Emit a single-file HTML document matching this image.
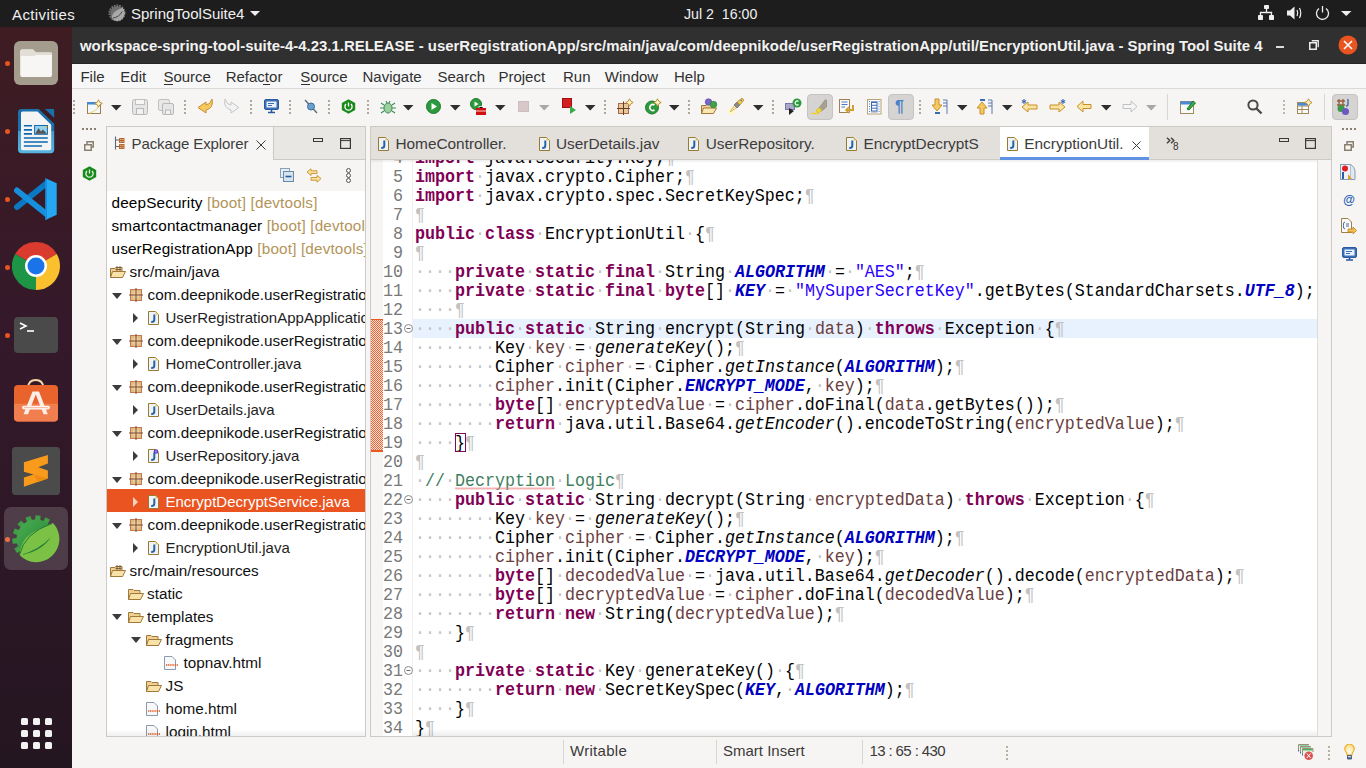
<!DOCTYPE html><html><head><meta charset="utf-8"><title>STS</title><style>
html,body{margin:0;padding:0;}
body{width:1366px;height:768px;position:relative;overflow:hidden;background:#f6f5f4;font-family:"Liberation Sans",sans-serif;}
.r{position:absolute;display:block;}
.t{position:absolute;white-space:nowrap;line-height:20px;}
.ln{position:absolute;left:0;width:32px;transform:scaleY(1.1);transform-origin:0 14px;text-align:right;font-family:"Liberation Mono",monospace;font-size:16.6667px;line-height:19px;color:#787878;}
.code{position:absolute;left:44px;white-space:pre;transform:scaleY(1.1);transform-origin:0 14px;font-family:"Liberation Mono",monospace;font-size:16.6667px;line-height:19px;color:#000;}
.code b{font-weight:bold}
.bm{}
.sq{}
</style></head><body><div class="r" style="left:0px;top:0px;width:1366px;height:27px;background:#1d1d1d;"></div>
<div class="t" style="left:12px;top:5px;font-size:15px;color:#f0f0f0;font-weight:normal;font-family:'Liberation Sans', sans-serif;letter-spacing:0.4px">Activities</div>
<svg class="r" style="left:108px;top:4px;" width="18" height="18" viewBox="0 0 18 18"><circle cx="9" cy="9" r="7.6" fill="none" stroke="#7a7a7a" stroke-width="1.8" stroke-dasharray="1.6 1.1"/><circle cx="9" cy="9" r="6.9" fill="#6e6e6e"/><path d="M3.6 14.6C4.2 8.5 7.5 6.5 14.6 3.8A7.6 7.6 0 0 1 3.6 14.6Z" fill="#a9a9a9"/><path d="M4.5 14.2Q11.5 13 14.2 7.5" stroke="#3a3a3a" stroke-width="0.9" fill="none"/></svg>
<div class="t" style="left:131px;top:4px;font-size:15px;color:#f0f0f0;font-weight:normal;font-family:'Liberation Sans', sans-serif;">SpringToolSuite4</div>
<svg class="r" style="left:250px;top:11px;" width="10" height="6" viewBox="0 0 10 6"><path d="M0 0H10L5 5Z" fill="#eee"/></svg>
<div class="t" style="left:684px;top:4px;font-size:14.2px;color:#f0f0f0;font-weight:normal;font-family:'Liberation Sans', sans-serif;">Jul 2&nbsp; 16:00</div>
<svg class="r" style="left:1258px;top:5px;" width="17" height="15" viewBox="0 0 17 15"><rect x="6" y="0" width="5" height="4" rx="0.8" fill="#eee"/><rect x="0" y="10" width="5" height="5" rx="0.8" fill="#eee"/><rect x="11" y="10" width="5" height="5" rx="0.8" fill="#eee"/><path d="M8.5 4V7.5M2.5 10V7.5H13.5V10" stroke="#eee" stroke-width="1.3" fill="none"/></svg>
<svg class="r" style="left:1287px;top:6px;" width="16" height="14" viewBox="0 0 16 14"><path d="M0 4.5H3L7.5 0.5V13.5L3 9.5H0Z" fill="#eee"/><path d="M10 4Q11.5 7 10 10M12.5 2Q15 7 12.5 12" stroke="#eee" stroke-width="1.2" fill="none"/></svg>
<svg class="r" style="left:1315px;top:5px;" width="15" height="15" viewBox="0 0 15 15"><path d="M4 3.5A6 6 0 1 0 11 3.5" stroke="#eee" stroke-width="1.3" fill="none"/><path d="M7.5 1V7.5" stroke="#eee" stroke-width="1.3"/></svg>
<svg class="r" style="left:1341px;top:11px;" width="11" height="6" viewBox="0 0 11 6"><path d="M0 0H10.5L5.25 5Z" fill="#eee"/></svg>
<div class="r" style="left:0px;top:27px;width:72px;height:741px;background:linear-gradient(180deg,#3e1c22 0%,#35192a 40%,#241621 100%);"></div>
<div class="r" style="left:5px;top:61px;width:5px;height:5px;border-radius:50%;background:#e95420"></div>
<div class="r" style="left:5px;top:129px;width:5px;height:5px;border-radius:50%;background:#e95420"></div>
<div class="r" style="left:5px;top:197px;width:5px;height:5px;border-radius:50%;background:#e95420"></div>
<div class="r" style="left:5px;top:265px;width:5px;height:5px;border-radius:50%;background:#e95420"></div>
<div class="r" style="left:5px;top:333px;width:5px;height:5px;border-radius:50%;background:#e95420"></div>
<div class="r" style="left:5px;top:537px;width:5px;height:5px;border-radius:50%;background:#e95420"></div>
<div class="r" style="left:4px;top:507px;width:64px;height:63px;background:rgba(255,255,255,0.16);border-radius:7px"></div>
<svg class="r" style="left:14px;top:41px;" width="44" height="44" viewBox="0 0 44 44"><rect x="0" y="0" width="44" height="44" rx="6" fill="#a49d8e"/><path d="M6.2 10.5a2 2 0 0 1 2-2H19L22 11.5H36a2 2 0 0 1 2 2V34a2 2 0 0 1-2 2H8.2a2 2 0 0 1-2-2Z" fill="#f7f6f4"/><path d="M6.2 10.5a2 2 0 0 1 2-2H19L22 11.5H38V13.5Q38 14 36 14H22L20 15H6.2Z" fill="#e2ded6"/></svg>
<svg class="r" style="left:18px;top:108px;" width="38" height="46" viewBox="0 0 38 46"><defs><linearGradient id="wg" x1="0" y1="0" x2="0" y2="1"><stop offset="0" stop-color="#1a70aa"/><stop offset="0.5" stop-color="#1a70aa"/><stop offset="0.5" stop-color="#3c9ed0"/><stop offset="1" stop-color="#58b4e0"/></linearGradient></defs><path d="M0 4.5a3.6 3.6 0 0 1 3.6-3.6H20.7L36.2 15.7V41.6a3.6 3.6 0 0 1-3.6 3.6H3.6A3.6 3.6 0 0 1 0 41.6Z" fill="url(#wg)"/><path d="M3 5a1.6 1.6 0 0 1 1.6-1.6H19.5L33.2 16.8V40.6a1.6 1.6 0 0 1-1.6 1.6H4.6A1.6 1.6 0 0 1 3 40.6Z" fill="#f4f4f4"/><path d="M27 0.9H35a1.2 1.2 0 0 1 1.2 1.2V10Z" fill="#1a70aa"/><path d="M5.9 17.8H14M5.9 21.9H14M5.9 25.9H14M5.9 30H29.8M5.9 34H29.8M5.9 38H23.9" stroke="#0a68b0" stroke-width="1.6"/><rect x="16.6" y="17.5" width="12.8" height="8.8" fill="#92d2f2" stroke="#1a68a8" stroke-width="1"/><path d="M17.2 25.8L20.5 20L23 23.5L25 21.6L28.9 25.8Z" fill="#555"/><path d="M26.5 18H28.9V20.6Z" fill="#f8c020"/></svg>
<svg class="r" style="left:14px;top:178px;" width="44" height="43" viewBox="0 0 44 43"><path d="M33 5L3 29" stroke="#0b78c4" stroke-width="6" stroke-linecap="round"/><path d="M3 12.5L33 36.5" stroke="#1690dc" stroke-width="6" stroke-linecap="round"/><path d="M31.5 0.3L42.7 5.2V36.8L31.5 42Z" fill="#24a8f2"/><path d="M31.5 0.3L33 1V41.3L31.5 42Z" fill="#1a8ee0"/></svg>
<svg class="r" style="left:12px;top:242px;" width="48" height="48" viewBox="0 0 48 48"><path d="M24 24L3.21 12A24 24 0 0 1 44.78 12Z" fill="#db3a2f"/><path d="M24 24L44.78 12A24 24 0 0 1 24 48Z" fill="#fbc02d"/><path d="M24 24L24 48A24 24 0 0 1 3.21 12Z" fill="#1e9446"/><circle cx="24" cy="24" r="11" fill="#fff"/><circle cx="24" cy="24" r="8.5" fill="#1a73e8"/></svg>
<svg class="r" style="left:14px;top:317px;" width="44" height="36" viewBox="0 0 44 36"><rect x="0" y="0" width="44" height="36" rx="4" fill="#4a4a4a"/><path d="M6 6l6 3-6 3" stroke="#fff" stroke-width="1.6" fill="none"/><path d="M13 14h7" stroke="#fff" stroke-width="1.6"/></svg>
<svg class="r" style="left:14px;top:379px;" width="44" height="43" viewBox="0 0 44 43"><path d="M14.1 8.5Q14.5 1 21.7 1Q28.9 1 29.3 8.5" stroke="#f6d8a8" stroke-width="1.8" fill="none"/><rect x="0" y="6" width="44" height="36.5" rx="4" fill="#e9632c"/><path d="M0 24.7H44V38.5a4 4 0 0 1-4 4H4a4 4 0 0 1-4-4Z" fill="#f07e4e"/><path d="M9.6 35.3L18.5 12.5H25L33.8 35.3H29.5L21.75 15.5L14 35.3Z" fill="#fbeee6"/><rect x="8" y="26.8" width="28" height="3.6" rx="1.8" fill="#fff4ee"/><path d="M10 28.6H34" stroke="#f2a080" stroke-width="0.7"/></svg>
<svg class="r" style="left:12px;top:447px;" width="48" height="48" viewBox="0 0 48 48"><rect x="0" y="0" width="48" height="48" rx="3.5" fill="#4b4b4b"/><path d="M11.9 15.3L35.9 8.1V16.6L26.25 20.3L35.9 23.4V31.6L11.9 39.7V30.6L21.6 27.5L11.9 24.7Z" fill="#f89a1c"/><path d="M21.6 27.5L35.9 31.6L26 35Z" fill="#ee8c10"/></svg>
<svg class="r" style="left:4px;top:506px;" width="64" height="64" viewBox="0 0 64 64"><defs><linearGradient id="sg" x1="0" y1="0" x2="1" y2="1"><stop offset="0" stop-color="#4caf50"/><stop offset="1" stop-color="#1b7a33"/></linearGradient></defs><rect x="11.21" y="40.90" width="5.2" height="5.2" transform="rotate(150 13.81 43.50)" fill="#3f9f45"/><rect x="8.48" y="32.23" width="5.2" height="5.2" transform="rotate(175 11.08 34.83)" fill="#3f9f45"/><rect x="9.67" y="23.22" width="5.2" height="5.2" transform="rotate(200 12.27 25.82)" fill="#3f9f45"/><rect x="14.55" y="15.55" width="5.2" height="5.2" transform="rotate(225 17.15 18.15)" fill="#3f9f45"/><rect x="22.22" y="10.67" width="5.2" height="5.2" transform="rotate(250 24.82 13.27)" fill="#3f9f45"/><rect x="31.23" y="9.48" width="5.2" height="5.2" transform="rotate(275 33.83 12.08)" fill="#3f9f45"/><rect x="39.90" y="12.21" width="5.2" height="5.2" transform="rotate(300 42.50 14.81)" fill="#3f9f45"/><circle cx="32" cy="33" r="19.5" fill="url(#sg)"/><path d="M15.5 49C18 30 26 27 49 17A22.5 22.5 0 0 1 15.5 49Z" fill="#7bc145"/><path d="M15.5 49Q20 27 48 17.5" stroke="#1f7a35" stroke-width="1" fill="none"/><path d="M17 49Q38 45 46.5 31.5Q36 43 17 49Z" fill="#1f7a35"/></svg>
<div class="r" style="left:21px;top:718px;width:7px;height:7px;border-radius:1.5px;background:#f2f2f2"></div>
<div class="r" style="left:33px;top:718px;width:7px;height:7px;border-radius:1.5px;background:#f2f2f2"></div>
<div class="r" style="left:45px;top:718px;width:7px;height:7px;border-radius:1.5px;background:#f2f2f2"></div>
<div class="r" style="left:21px;top:730px;width:7px;height:7px;border-radius:1.5px;background:#f2f2f2"></div>
<div class="r" style="left:33px;top:730px;width:7px;height:7px;border-radius:1.5px;background:#f2f2f2"></div>
<div class="r" style="left:45px;top:730px;width:7px;height:7px;border-radius:1.5px;background:#f2f2f2"></div>
<div class="r" style="left:21px;top:742px;width:7px;height:7px;border-radius:1.5px;background:#f2f2f2"></div>
<div class="r" style="left:33px;top:742px;width:7px;height:7px;border-radius:1.5px;background:#f2f2f2"></div>
<div class="r" style="left:45px;top:742px;width:7px;height:7px;border-radius:1.5px;background:#f2f2f2"></div>
<div class="r" style="left:72px;top:27px;width:1294px;height:37px;background:#303030;"></div>
<div class="r" style="left:72px;top:63px;width:1294px;height:1px;background:#262626;"></div>
<div class="t" style="left:80px;top:36px;font-size:14.94px;color:#f2f2f2;font-weight:bold;font-family:'Liberation Sans', sans-serif;">workspace-spring-tool-suite-4-4.23.1.RELEASE - userRegistrationApp/src/main/java/com/deepnikode/userRegistrationApp/util/EncryptionUtil.java - Spring Tool Suite 4</div>
<div class="r" style="left:1276px;top:46px;width:8px;height:2px;background:#ddd;"></div>
<svg class="r" style="left:1309px;top:40px;" width="10" height="10" viewBox="0 0 10 10"><rect x="0.75" y="2.75" width="6.5" height="6.5" stroke="#eee" stroke-width="1.5" fill="none"/><path d="M2.75 0.75H9.25V7.25" stroke="#eee" stroke-width="1.3" fill="none"/></svg>
<svg class="r" style="left:1338px;top:35px;" width="20" height="20" viewBox="0 0 20 20"><circle cx="10" cy="10" r="9.5" fill="#e95420"/><path d="M6 6L14 14M14 6L6 14" stroke="#fff" stroke-width="1.6"/></svg>
<div class="r" style="left:72px;top:64px;width:1294px;height:704px;background:#f6f5f4;"></div>
<div class="r" style="left:72px;top:64px;width:1294px;height:24px;background:#f7f7f7;"></div>
<div class="r" style="left:72px;top:88px;width:1294px;height:1px;background:#dcdad7;"></div>
<div class="t" style="left:80.4px;top:67px;font-size:15px;color:#303030;font-weight:normal;font-family:'Liberation Sans', sans-serif;">File</div>
<div class="t" style="left:120.3px;top:67px;font-size:15px;color:#303030;font-weight:normal;font-family:'Liberation Sans', sans-serif;">Edit</div>
<div class="t" style="left:163.4px;top:67px;font-size:15px;color:#303030;font-weight:normal;font-family:'Liberation Sans', sans-serif;">Source</div>
<div class="t" style="left:225.7px;top:67px;font-size:15px;color:#303030;font-weight:normal;font-family:'Liberation Sans', sans-serif;">Refactor</div>
<div class="t" style="left:300.2px;top:67px;font-size:15px;color:#303030;font-weight:normal;font-family:'Liberation Sans', sans-serif;">Source</div>
<div class="t" style="left:362.5px;top:67px;font-size:15px;color:#303030;font-weight:normal;font-family:'Liberation Sans', sans-serif;">Navigate</div>
<div class="t" style="left:437.5px;top:67px;font-size:15px;color:#303030;font-weight:normal;font-family:'Liberation Sans', sans-serif;">Search</div>
<div class="t" style="left:498.4px;top:67px;font-size:15px;color:#303030;font-weight:normal;font-family:'Liberation Sans', sans-serif;">Project</div>
<div class="t" style="left:563px;top:67px;font-size:15px;color:#303030;font-weight:normal;font-family:'Liberation Sans', sans-serif;">Run</div>
<div class="t" style="left:604.8px;top:67px;font-size:15px;color:#303030;font-weight:normal;font-family:'Liberation Sans', sans-serif;">Window</div>
<div class="t" style="left:674px;top:67px;font-size:15px;color:#303030;font-weight:normal;font-family:'Liberation Sans', sans-serif;">Help</div>
<div class="r" style="left:164px;top:84px;width:9px;height:1px;background:#303030;"></div>
<div class="r" style="left:263px;top:84px;width:7px;height:1px;background:#303030;"></div>
<div class="r" style="left:301px;top:84px;width:9px;height:1px;background:#303030;"></div>
<div class="r" style="left:73px;top:100px;width:2px;height:2px;background:#b0a89c;"></div>
<div class="r" style="left:73px;top:104px;width:2px;height:2px;background:#b0a89c;"></div>
<div class="r" style="left:73px;top:108px;width:2px;height:2px;background:#b0a89c;"></div>
<div class="r" style="left:73px;top:112px;width:2px;height:2px;background:#b0a89c;"></div>
<svg class="r" style="left:87px;top:99px;" width="17" height="16" viewBox="0 0 17 16"><rect x="0.5" y="3.5" width="13" height="11" fill="#f0f7fd" stroke="#9a8048"/><rect x="0.5" y="3" width="11" height="2.5" fill="#3d8ad6"/><path d="M2 14Q9 13 11.5 7" stroke="#f2dc98" stroke-width="1.3" fill="none"/><path d="M11.5 0.8Q12.2 4 15.3 4.5Q12.2 5 11.5 8.2Q10.8 5 7.7 4.5Q10.8 4 11.5 0.8Z" fill="#fff8d8" stroke="#c09030" stroke-width="1"/></svg>
<svg class="r" style="left:111px;top:105px;" width="11" height="6" viewBox="0 0 11 6"><path d="M0 0H10.5L5.25 5.5Z" fill="#2e2e2e"/></svg>
<svg class="r" style="left:132px;top:99px;" width="16" height="16" viewBox="0 0 16 16"><rect x="0.5" y="0.5" width="15" height="15" rx="2" fill="#e6e6e6" stroke="#b8b8b8"/><rect x="3.5" y="0.5" width="9" height="5" fill="#f6f6f6" stroke="#c0c0c0"/><rect x="4.5" y="9.5" width="7" height="6" fill="#f2f2f2" stroke="#b8b8b8"/></svg>
<svg class="r" style="left:158px;top:99px;" width="16" height="16" viewBox="0 0 16 16"><rect x="0.5" y="0.5" width="11" height="11" rx="1.5" fill="#e8e8e8" stroke="#c0c0c0"/><rect x="4.5" y="4.5" width="11" height="11" rx="1.5" fill="#e6e6e6" stroke="#b8b8b8"/><rect x="7.5" y="11" width="5" height="4.5" fill="#f2f2f2" stroke="#b8b8b8"/></svg>
<div class="r" style="left:184px;top:100px;width:2px;height:2px;background:#b0a89c;"></div>
<div class="r" style="left:184px;top:104px;width:2px;height:2px;background:#b0a89c;"></div>
<div class="r" style="left:184px;top:108px;width:2px;height:2px;background:#b0a89c;"></div>
<div class="r" style="left:184px;top:112px;width:2px;height:2px;background:#b0a89c;"></div>
<svg class="r" style="left:197px;top:98px;" width="17" height="17" viewBox="0 0 17 17"><path d="M15 1Q17 10 9 12V15L1 9.5L9 4V7Q13 7 15 1Z" fill="#f6c860" stroke="#c8902a" stroke-width="1"/></svg>
<svg class="r" style="left:223px;top:98px;" width="17" height="17" viewBox="0 0 17 17"><path d="M2 1Q0 10 8 12V15L16 9.5L8 4V7Q4 7 2 1Z" fill="#f2f2f2" stroke="#c6c6c6" stroke-width="1"/></svg>
<div class="r" style="left:250px;top:100px;width:2px;height:2px;background:#b0a89c;"></div>
<div class="r" style="left:250px;top:104px;width:2px;height:2px;background:#b0a89c;"></div>
<div class="r" style="left:250px;top:108px;width:2px;height:2px;background:#b0a89c;"></div>
<div class="r" style="left:250px;top:112px;width:2px;height:2px;background:#b0a89c;"></div>
<svg class="r" style="left:264px;top:99px;" width="15" height="15" viewBox="0 0 15 15"><rect x="0.5" y="0.5" width="14" height="10" rx="1.5" fill="#3a6fb6" stroke="#2a5aa0"/><rect x="2.5" y="2.5" width="10" height="6" fill="#eaf2fb"/><path d="M4 4.5H10M4 6.5H8" stroke="#3a6fb6" stroke-width="1"/><path d="M4 13.5H11M7.5 11V13" stroke="#2a5aa0" stroke-width="1.6"/></svg>
<div class="r" style="left:289px;top:100px;width:2px;height:2px;background:#b0a89c;"></div>
<div class="r" style="left:289px;top:104px;width:2px;height:2px;background:#b0a89c;"></div>
<div class="r" style="left:289px;top:108px;width:2px;height:2px;background:#b0a89c;"></div>
<div class="r" style="left:289px;top:112px;width:2px;height:2px;background:#b0a89c;"></div>
<svg class="r" style="left:304px;top:99px;" width="14" height="15" viewBox="0 0 14 15"><path d="M1 1L13 14" stroke="#5a6a78" stroke-width="1.4"/><circle cx="7" cy="7.5" r="3.5" fill="#6aa0d0" stroke="#3a6a9a"/></svg>
<div class="r" style="left:328px;top:100px;width:2px;height:2px;background:#b0a89c;"></div>
<div class="r" style="left:328px;top:104px;width:2px;height:2px;background:#b0a89c;"></div>
<div class="r" style="left:328px;top:108px;width:2px;height:2px;background:#b0a89c;"></div>
<div class="r" style="left:328px;top:112px;width:2px;height:2px;background:#b0a89c;"></div>
<svg class="r" style="left:341px;top:99px;" width="15" height="15" viewBox="0 0 15 15"><path d="M7.5 0.3L14.2 4V11L7.5 14.7L0.8 11V4Z" fill="#1a8a1a"/><path d="M5 5A3.6 3.6 0 1 0 10 5" stroke="#fff" stroke-width="1.3" fill="none"/><path d="M7.5 3.5V7.5" stroke="#fff" stroke-width="1.3"/></svg>
<div class="r" style="left:367px;top:100px;width:2px;height:2px;background:#b0a89c;"></div>
<div class="r" style="left:367px;top:104px;width:2px;height:2px;background:#b0a89c;"></div>
<div class="r" style="left:367px;top:108px;width:2px;height:2px;background:#b0a89c;"></div>
<div class="r" style="left:367px;top:112px;width:2px;height:2px;background:#b0a89c;"></div>
<svg class="r" style="left:380px;top:99px;" width="16" height="16" viewBox="0 0 16 16"><ellipse cx="8" cy="9" rx="4" ry="5" fill="#9ad09a" stroke="#3a8a5a"/><path d="M1 4L4 6M15 4L12 6M0 9H4M16 9H12M1 14L4 12M15 14L12 12M6 2L7 4M10 2L9 4" stroke="#3a8a5a" stroke-width="1.1"/></svg>
<svg class="r" style="left:403px;top:105px;" width="11" height="6" viewBox="0 0 11 6"><path d="M0 0H10.5L5.25 5.5Z" fill="#2e2e2e"/></svg>
<svg class="r" style="left:426px;top:99px;" width="15" height="15" viewBox="0 0 15 15"><circle cx="7.5" cy="7.5" r="7" fill="#2c9a3c" stroke="#1d7a2d"/><path d="M5.5 4V11L11 7.5Z" fill="#fff"/></svg>
<svg class="r" style="left:450px;top:105px;" width="11" height="6" viewBox="0 0 11 6"><path d="M0 0H10.5L5.25 5.5Z" fill="#2e2e2e"/></svg>
<svg class="r" style="left:470px;top:98px;" width="17" height="18" viewBox="0 0 17 18"><circle cx="6" cy="6" r="5.5" fill="#2c9a3c" stroke="#1d7a2d"/><path d="M4.5 3.5V8.5L8.5 6Z" fill="#fff"/><rect x="6" y="10" width="10" height="7" fill="#d01010"/><path d="M9 10V8.5H13V10M6 13H16" stroke="#fff" stroke-width="0.8"/></svg>
<svg class="r" style="left:495px;top:105px;" width="11" height="6" viewBox="0 0 11 6"><path d="M0 0H10.5L5.25 5.5Z" fill="#2e2e2e"/></svg>
<svg class="r" style="left:518px;top:101px;" width="11" height="11" viewBox="0 0 11 11"><rect x="0.5" y="0.5" width="10" height="10" fill="#d8c8c8" stroke="#c8c0c0"/></svg>
<svg class="r" style="left:539px;top:105px;" width="11" height="6" viewBox="0 0 11 6"><path d="M0 0H10.5L5.25 5.5Z" fill="#a8a8a8"/></svg>
<svg class="r" style="left:562px;top:98px;" width="15" height="17" viewBox="0 0 15 17"><rect x="0.5" y="0.5" width="9" height="9" fill="#d42020" stroke="#a01010"/><path d="M8 8V16L14 12Z" fill="#3aaa4a"/></svg>
<svg class="r" style="left:585px;top:105px;" width="11" height="6" viewBox="0 0 11 6"><path d="M0 0H10.5L5.25 5.5Z" fill="#2e2e2e"/></svg>
<div class="r" style="left:604px;top:100px;width:2px;height:2px;background:#b0a89c;"></div>
<div class="r" style="left:604px;top:104px;width:2px;height:2px;background:#b0a89c;"></div>
<div class="r" style="left:604px;top:108px;width:2px;height:2px;background:#b0a89c;"></div>
<div class="r" style="left:604px;top:112px;width:2px;height:2px;background:#b0a89c;"></div>
<svg class="r" style="left:617px;top:98px;" width="17" height="17" viewBox="0 0 17 17"><rect x="1.5" y="5.5" width="10" height="10" fill="#e8c898" stroke="#a86a48"/><path d="M6.5 3.5V17M0 10.5H13" stroke="#6a3a2a" stroke-width="1"/><path d="M12.5 0.8Q13.2 3.8 16.2 4.5Q13.2 5.2 12.5 8.2Q11.8 5.2 8.8 4.5Q11.8 3.8 12.5 0.8Z" fill="#fff6d0" stroke="#c09030" stroke-width="1"/></svg>
<svg class="r" style="left:645px;top:98px;" width="17" height="17" viewBox="0 0 17 17"><circle cx="7" cy="9.5" r="6.5" fill="#2c9a3c" stroke="#1d7a2d"/><path d="M9.5 7A3 3 0 1 0 9.5 12" stroke="#fff" stroke-width="1.6" fill="none"/><path d="M12.5 0.8Q13.2 3.8 16.2 4.5Q13.2 5.2 12.5 8.2Q11.8 5.2 8.8 4.5Q11.8 3.8 12.5 0.8Z" fill="#fff6d0" stroke="#c09030" stroke-width="1"/></svg>
<svg class="r" style="left:669px;top:105px;" width="11" height="6" viewBox="0 0 11 6"><path d="M0 0H10.5L5.25 5.5Z" fill="#2e2e2e"/></svg>
<div class="r" style="left:688px;top:100px;width:2px;height:2px;background:#b0a89c;"></div>
<div class="r" style="left:688px;top:104px;width:2px;height:2px;background:#b0a89c;"></div>
<div class="r" style="left:688px;top:108px;width:2px;height:2px;background:#b0a89c;"></div>
<div class="r" style="left:688px;top:112px;width:2px;height:2px;background:#b0a89c;"></div>
<svg class="r" style="left:701px;top:98px;" width="17" height="17" viewBox="0 0 17 17"><path d="M0.5 7.5H5L6 6.5H11V15.5H0.5Z" fill="#f0d090" stroke="#a0783a"/><path d="M2.5 10H15.5L12.5 15.5H0.5Z" fill="#fae6b0" stroke="#a0783a"/><circle cx="7.5" cy="4" r="3.3" fill="#7a64c8" stroke="#5a48a0" stroke-width="0.6"/><circle cx="12.5" cy="6.5" r="3.3" fill="#44a04c" stroke="#2a7a30" stroke-width="0.6"/></svg>
<svg class="r" style="left:728px;top:97px;" width="17" height="18" viewBox="0 0 17 18"><circle cx="3.5" cy="14" r="3.5" fill="#fff8c0" opacity="0.9"/><path d="M2 15L8 6L11 9Z" fill="#f8e8b0" stroke="#c8a050" stroke-width="0.7"/><path d="M6 8L9 5L12 8L9 11Z" fill="#8a8a8a" stroke="#606060" stroke-width="0.6"/><path d="M9 5L14 1L16 3L12 8Z" fill="#f0c850" stroke="#b08020" stroke-width="0.7"/><circle cx="13.3" cy="3.5" r="0.8" fill="#3a6ab0"/></svg>
<svg class="r" style="left:753px;top:105px;" width="11" height="6" viewBox="0 0 11 6"><path d="M0 0H10.5L5.25 5.5Z" fill="#2e2e2e"/></svg>
<div class="r" style="left:772px;top:100px;width:2px;height:2px;background:#b0a89c;"></div>
<div class="r" style="left:772px;top:104px;width:2px;height:2px;background:#b0a89c;"></div>
<div class="r" style="left:772px;top:108px;width:2px;height:2px;background:#b0a89c;"></div>
<div class="r" style="left:772px;top:112px;width:2px;height:2px;background:#b0a89c;"></div>
<svg class="r" style="left:785px;top:98px;" width="17" height="17" viewBox="0 0 17 17"><rect x="0.5" y="5.5" width="9" height="6" fill="#a8a8c8" stroke="#7878a8"/><path d="M4 10V17L9 13Z" fill="#222"/><circle cx="12" cy="5" r="4.5" fill="#2c9a3c"/><path d="M13.5 3.5A2 2 0 1 0 13.5 6.5" stroke="#fff" stroke-width="1.2" fill="none"/></svg>
<div class="r" style="left:807px;top:94px;width:26px;height:26px;background:#d6d4d2;border-radius:4px;border:1px solid #c6c4c2;box-sizing:border-box"></div>
<svg class="r" style="left:811px;top:98px;" width="17" height="17" viewBox="0 0 17 17"><path d="M8 10L14.5 1.5L15.5 2.5V9L10.5 13Z" fill="#a8a090" stroke="#8a8270" stroke-width="0.6"/><path d="M5 13L8 9.5L11 12.5L7 15Z" fill="#f0d838" stroke="#d0b020" stroke-width="0.6"/><path d="M0.5 15.5H8" stroke="#f0d020" stroke-width="1.4"/></svg>
<svg class="r" style="left:839px;top:99px;" width="16" height="16" viewBox="0 0 16 16"><rect x="0.5" y="0.5" width="10" height="13" fill="#fafafa" stroke="#a08050"/><path d="M2.5 3H8.5M2.5 5.5H8.5M2.5 8H6" stroke="#4a7ac0"/><path d="M14 6V11H8" stroke="#d0a030" stroke-width="2" fill="none"/><path d="M10 8L7 11L10 14" stroke="#d0a030" stroke-width="1.6" fill="none"/></svg>
<svg class="r" style="left:867px;top:99px;" width="15" height="16" viewBox="0 0 15 16"><rect x="0.5" y="0.5" width="13.5" height="14.5" fill="#fcfcfc" stroke="#b8a478"/><path d="M2.5 2V14M12 2V14" stroke="#5a82c0" stroke-width="1" stroke-dasharray="1 1.5"/><rect x="4.5" y="3.5" width="5.5" height="8.5" fill="#fff" stroke="#3a6ab0"/><path d="M4.5 6.3H10M4.5 9.2H10" stroke="#3a6ab0"/><path d="M4 2.5H10.5M4 13H10.5" stroke="#6a8ac0" stroke-width="0.8"/></svg>
<div class="r" style="left:888px;top:94px;width:26px;height:26px;background:#d6d4d2;border-radius:4px;border:1px solid #c6c4c2;box-sizing:border-box"></div>
<div class="t" style="left:895px;top:97px;font-size:16px;color:#4a82c8;font-weight:bold;font-family:'Liberation Sans', sans-serif;">&para;</div>
<div class="r" style="left:919px;top:100px;width:2px;height:2px;background:#b0a89c;"></div>
<div class="r" style="left:919px;top:104px;width:2px;height:2px;background:#b0a89c;"></div>
<div class="r" style="left:919px;top:108px;width:2px;height:2px;background:#b0a89c;"></div>
<div class="r" style="left:919px;top:112px;width:2px;height:2px;background:#b0a89c;"></div>
<svg class="r" style="left:932px;top:98px;" width="16" height="17" viewBox="0 0 16 17"><path d="M3 1H7V7H10L5 13L0 7H3Z" fill="#f6c860" stroke="#c8902a"/><path d="M11 2H15M11 5H15M11 8H15M15 2V16" stroke="#5a7ab0" stroke-width="1"/><rect x="3" y="14" width="5" height="2" fill="#3a6ab0"/></svg>
<svg class="r" style="left:957px;top:105px;" width="11" height="6" viewBox="0 0 11 6"><path d="M0 0H10.5L5.25 5.5Z" fill="#2e2e2e"/></svg>
<svg class="r" style="left:977px;top:98px;" width="16" height="17" viewBox="0 0 16 17"><path d="M3 16H7V10H10L5 4L0 10H3Z" fill="#f6c860" stroke="#c8902a"/><path d="M11 2H15M11 5H15M11 8H15M15 2V16" stroke="#5a7ab0" stroke-width="1"/><rect x="3" y="1" width="5" height="2" fill="#3a6ab0"/></svg>
<svg class="r" style="left:1002px;top:105px;" width="11" height="6" viewBox="0 0 11 6"><path d="M0 0H10.5L5.25 5.5Z" fill="#2e2e2e"/></svg>
<svg class="r" style="left:1021px;top:99px;" width="18" height="14" viewBox="0 0 18 14"><path d="M1 8L7 3V6H16V10H7V13Z" fill="#fbe3a0" stroke="#c8902a"/><path d="M3 0V5M0.8 1.5L5.2 3.5M5.2 1.5L0.8 3.5" stroke="#2a5ab0" stroke-width="1"/></svg>
<svg class="r" style="left:1048px;top:99px;" width="18" height="14" viewBox="0 0 18 14"><path d="M17 8L11 3V6H2V10H11V13Z" fill="#fbe3a0" stroke="#c8902a"/><path d="M15 0V5M12.8 1.5L17.2 3.5M17.2 1.5L12.8 3.5" stroke="#2a5ab0" stroke-width="1"/></svg>
<svg class="r" style="left:1076px;top:100px;" width="16" height="13" viewBox="0 0 16 13"><path d="M1 6.5L7 1V4.5H15V8.5H7V12Z" fill="#fbe3a0" stroke="#c8902a"/></svg>
<svg class="r" style="left:1101px;top:105px;" width="11" height="6" viewBox="0 0 11 6"><path d="M0 0H10.5L5.25 5.5Z" fill="#2e2e2e"/></svg>
<svg class="r" style="left:1122px;top:100px;" width="16" height="13" viewBox="0 0 16 13"><path d="M15 6.5L9 1V4.5H1V8.5H9V12Z" fill="#f6f6f6" stroke="#c0c0c0"/></svg>
<svg class="r" style="left:1146px;top:105px;" width="11" height="6" viewBox="0 0 11 6"><path d="M0 0H10.5L5.25 5.5Z" fill="#a8a8a8"/></svg>
<div class="r" style="left:1167px;top:94px;width:1px;height:26px;background:#d8d6d3;"></div>
<svg class="r" style="left:1180px;top:98px;" width="17" height="17" viewBox="0 0 17 17"><rect x="0.5" y="3.5" width="13" height="12" fill="#fafafa" stroke="#a08a5a"/><rect x="0.5" y="3.5" width="13" height="3" fill="#4a8ad8"/><path d="M7 11L13 3L15.5 5L9 12Z" fill="#3aaa4a" stroke="#1a7a2a"/></svg>
<svg class="r" style="left:1247px;top:99px;" width="16" height="16" viewBox="0 0 16 16"><circle cx="6" cy="6" r="4.6" stroke="#4a4a4a" stroke-width="2" fill="none"/><path d="M9.5 9.5L14.5 14.5" stroke="#4a4a4a" stroke-width="2.4"/></svg>
<div class="r" style="left:1283px;top:100px;width:2px;height:2px;background:#c0b8ac;"></div>
<div class="r" style="left:1283px;top:104px;width:2px;height:2px;background:#c0b8ac;"></div>
<div class="r" style="left:1283px;top:108px;width:2px;height:2px;background:#c0b8ac;"></div>
<div class="r" style="left:1283px;top:112px;width:2px;height:2px;background:#c0b8ac;"></div>
<svg class="r" style="left:1297px;top:98px;" width="15" height="17" viewBox="0 0 15 17"><rect x="0.5" y="4.5" width="11" height="11" fill="#fafafa" stroke="#a08a5a"/><path d="M0.5 8H11.5M0.5 11.5H11.5M5 4.5V15.5" stroke="#a08a5a"/><rect x="1" y="5" width="10" height="2.5" fill="#4a8ad8"/><path d="M11.5 0.8Q12.2 3.8 15.2 4.5Q12.2 5.2 11.5 8.2Q10.8 5.2 7.8 4.5Q10.8 3.8 11.5 0.8Z" fill="#fff6d0" stroke="#c09030" stroke-width="1"/></svg>
<div class="r" style="left:1324px;top:94px;width:1px;height:26px;background:#d8d6d3;"></div>
<div class="r" style="left:1332px;top:94px;width:26px;height:26px;background:#d6d4d2;border-radius:4px;border:1px solid #c6c4c2;box-sizing:border-box"></div>
<svg class="r" style="left:1336px;top:98px;" width="18" height="18" viewBox="0 0 18 18"><path d="M3 1V9M7 1V9M1 3H9M1 7H9" stroke="#9a5a3a" stroke-width="1.3"/><path d="M12 1V6Q12 8 10 8" stroke="#3a6ab0" stroke-width="1.4" fill="none"/><circle cx="5" cy="10.5" r="3.5" fill="#3a9a4a"/><circle cx="9.5" cy="13.5" r="3.5" fill="#6a5ac0"/></svg>
<div class="r" style="left:82px;top:128px;width:2px;height:2px;background:#8a8070;"></div>
<div class="r" style="left:86px;top:128px;width:2px;height:2px;background:#8a8070;"></div>
<div class="r" style="left:90px;top:128px;width:2px;height:2px;background:#8a8070;"></div>
<div class="r" style="left:94px;top:128px;width:2px;height:2px;background:#8a8070;"></div>
<svg class="r" style="left:84px;top:141px;" width="10" height="10" viewBox="0 0 10 10"><rect x="0.75" y="3.75" width="6.5" height="5.5" stroke="#8a8070" stroke-width="1.5" fill="#f6f5f4"/><path d="M3 3V0.75H9.25V6H7.5" stroke="#8a8070" stroke-width="1.5" fill="none"/></svg>
<svg class="r" style="left:82px;top:166px;" width="15" height="15" viewBox="0 0 15 15"><path d="M7.5 0.3L14.2 4V11L7.5 14.7L0.8 11V4Z" fill="#1a8a1a"/><path d="M5 5A3.6 3.6 0 1 0 10 5" stroke="#e6f2e6" stroke-width="1.3" fill="none"/><path d="M7.5 3.5V7.5" stroke="#e6f2e6" stroke-width="1.3"/></svg>
<div class="r" style="left:106px;top:126px;width:260px;height:611px;background:#f6f5f4;border:1px solid #cdc9c4;box-sizing:border-box"></div>
<div class="r" style="left:273px;top:127px;width:92px;height:33px;background:#e9e7e4;border-left:1px solid #cdc9c4;border-bottom:1px solid #cdc9c4;box-sizing:border-box"></div>
<svg class="r" style="left:114px;top:136px;" width="11" height="14" viewBox="0 0 11 14"><path d="M1.5 0.5V13.5M1.5 4H5M1.5 10.5H5" stroke="#5a6878" stroke-width="1.1"/><rect x="5" y="2" width="5.5" height="5" rx="0.6" fill="#b8652a"/><rect x="5" y="8" width="5.5" height="5" rx="0.6" fill="#b8652a"/><path d="M6.3 3.5h1M8.5 3.5h1M6.3 5.6h1M8.5 5.6h1M6.3 9.5h1M8.5 9.5h1M6.3 11.6h1M8.5 11.6h1" stroke="#f0d8c0" stroke-width="1"/></svg>
<div class="t" style="left:131.5px;top:134px;font-size:15px;color:#3c3c3c;font-weight:normal;font-family:'Liberation Sans', sans-serif;letter-spacing:-0.1px">Package Explorer</div>
<svg class="r" style="left:256px;top:140px;" width="10" height="10" viewBox="0 0 10 10"><path d="M0.5 0.5L9.5 9.5M9.5 0.5L0.5 9.5" stroke="#3a3a3a" stroke-width="1"/></svg>
<div class="r" style="left:313px;top:138px;width:10px;height:4px;background:transparent;border:1.2px solid #3a3a3a;box-sizing:border-box"></div>
<svg class="r" style="left:340px;top:138px;" width="11" height="11" viewBox="0 0 11 11"><rect x="0.6" y="0.6" width="9.8" height="9.8" stroke="#3a3a3a" stroke-width="1.2" fill="none"/><path d="M0.6 2.6H10.4" stroke="#3a3a3a" stroke-width="1"/></svg>
<svg class="r" style="left:280px;top:168px;" width="14" height="14" viewBox="0 0 14 14"><rect x="0.5" y="0.5" width="9" height="9" fill="#e4eef6" stroke="#8aa0b4"/><rect x="3.5" y="3.5" width="10" height="10" fill="#d4e4f0" stroke="#6a8aa4"/><path d="M5.5 8.5H11.5" stroke="#2a5a9a" stroke-width="1.6"/></svg>
<svg class="r" style="left:306px;top:168px;" width="16" height="15" viewBox="0 0 16 15"><path d="M1 4L5 0.8V2.8H11V5.5H5V7.5Z" fill="#fbe3a0" stroke="#c8902a" stroke-width="0.9"/><path d="M15 10.5L11 7.5V9.5H5V12.2H11V14.2Z" fill="#fbe3a0" stroke="#c8902a" stroke-width="0.9"/></svg>
<svg class="r" style="left:345px;top:168px;" width="7" height="15" viewBox="0 0 7 15"><circle cx="3.5" cy="2.5" r="2" stroke="#555" stroke-width="1" fill="none"/><circle cx="3.5" cy="7.5" r="2" stroke="#555" stroke-width="1" fill="none"/><circle cx="3.5" cy="12.5" r="2" stroke="#555" stroke-width="1" fill="none"/></svg>
<div class="r" style="left:107px;top:191px;width:258px;height:545px;background:#fff;overflow:hidden">
<div class="t" style="left:4.5px;top:2px;font-size:15.3px;color:#000;letter-spacing:0.15px">deepSecurity <span style="color:#b3955a">[boot] [devtools]</span></div>
<div class="t" style="left:4.5px;top:25px;font-size:15.3px;color:#000;letter-spacing:0.15px">smartcontactmanager <span style="color:#b3955a">[boot] [devtools]</span></div>
<div class="t" style="left:4.5px;top:48px;font-size:15.3px;color:#000;letter-spacing:0.15px">userRegistrationApp <span style="color:#b3955a">[boot] [devtools]</span></div>
<svg class="r" style="left:3px;top:75px" width="16" height="12" viewBox="0 0 16 12"><path d="M0.5 2.5H5L6 1.5H12V11.5H0.5Z" fill="#f0d090" stroke="#a0783a"/><path d="M2.5 5.5H15.5L12.5 11.5H0.5Z" fill="#f8e2a8" stroke="#a0783a"/><path d="M7 0V5M10 0V5M5.5 1.5H11.5M5.5 3.5H11.5" stroke="#7a5a3a" stroke-width="0.9"/></svg>
<div class="t" style="left:22.5px;top:71px;font-size:15.3px;color:#111">src/main/java</div>
<svg class="r" style="left:5px;top:102px" width="10" height="6" viewBox="0 0 10 6"><path d="M0 0H10L5 6Z" fill="#3c3c3c"/></svg>
<svg class="r" style="left:22px;top:97px" width="14" height="14" viewBox="0 0 14 14"><defs><radialGradient id="pg"><stop offset="0" stop-color="#f6e2b0"/><stop offset="1" stop-color="#e0b880"/></radialGradient></defs><rect x="1.5" y="1.5" width="11" height="11" fill="url(#pg)" stroke="#c47a50"/><path d="M7 0V14M0 7H14" stroke="#7a4a3a" stroke-width="1"/></svg>
<div class="t" style="left:40.5px;top:94px;font-size:15.3px;color:#111;white-space:nowrap">com.deepnikode.userRegistrationApp</div>
<svg class="r" style="left:26px;top:122px" width="5" height="10" viewBox="0 0 5 10"><path d="M0 0V10L5 5Z" fill="#3c3c3c"/></svg>
<svg class="r" style="left:41px;top:120px" width="11" height="14" viewBox="0 0 11 14"><path d="M0.5 0.5H7.5L10.5 3.5V13.5H0.5Z" fill="#eef3fa" stroke="#9a7a30"/><path d="M7.5 0.5V3.5H10.5Z" fill="#f0c860"/><path d="M6.3 3.5V8.8Q6.3 11 3.2 11" stroke="#2a62a0" stroke-width="2" fill="none"/></svg>
<div class="t" style="left:58.5px;top:117px;font-size:15px;color:#1e1e1e;white-space:nowrap">UserRegistrationAppApplication.java</div>
<svg class="r" style="left:5px;top:148px" width="10" height="6" viewBox="0 0 10 6"><path d="M0 0H10L5 6Z" fill="#3c3c3c"/></svg>
<svg class="r" style="left:22px;top:143px" width="14" height="14" viewBox="0 0 14 14"><defs><radialGradient id="pg"><stop offset="0" stop-color="#f6e2b0"/><stop offset="1" stop-color="#e0b880"/></radialGradient></defs><rect x="1.5" y="1.5" width="11" height="11" fill="url(#pg)" stroke="#c47a50"/><path d="M7 0V14M0 7H14" stroke="#7a4a3a" stroke-width="1"/></svg>
<div class="t" style="left:40.5px;top:140px;font-size:15.3px;color:#111;white-space:nowrap">com.deepnikode.userRegistrationApp.controller</div>
<svg class="r" style="left:26px;top:168px" width="5" height="10" viewBox="0 0 5 10"><path d="M0 0V10L5 5Z" fill="#3c3c3c"/></svg>
<svg class="r" style="left:41px;top:166px" width="11" height="14" viewBox="0 0 11 14"><path d="M0.5 0.5H7.5L10.5 3.5V13.5H0.5Z" fill="#eef3fa" stroke="#9a7a30"/><path d="M7.5 0.5V3.5H10.5Z" fill="#f0c860"/><path d="M6.3 3.5V8.8Q6.3 11 3.2 11" stroke="#2a62a0" stroke-width="2" fill="none"/></svg>
<div class="t" style="left:58.5px;top:163px;font-size:15px;color:#1e1e1e;white-space:nowrap">HomeController.java</div>
<svg class="r" style="left:5px;top:194px" width="10" height="6" viewBox="0 0 10 6"><path d="M0 0H10L5 6Z" fill="#3c3c3c"/></svg>
<svg class="r" style="left:22px;top:189px" width="14" height="14" viewBox="0 0 14 14"><defs><radialGradient id="pg"><stop offset="0" stop-color="#f6e2b0"/><stop offset="1" stop-color="#e0b880"/></radialGradient></defs><rect x="1.5" y="1.5" width="11" height="11" fill="url(#pg)" stroke="#c47a50"/><path d="M7 0V14M0 7H14" stroke="#7a4a3a" stroke-width="1"/></svg>
<div class="t" style="left:40.5px;top:186px;font-size:15.3px;color:#111;white-space:nowrap">com.deepnikode.userRegistrationApp.model</div>
<svg class="r" style="left:26px;top:214px" width="5" height="10" viewBox="0 0 5 10"><path d="M0 0V10L5 5Z" fill="#3c3c3c"/></svg>
<svg class="r" style="left:41px;top:212px" width="11" height="14" viewBox="0 0 11 14"><path d="M0.5 0.5H7.5L10.5 3.5V13.5H0.5Z" fill="#eef3fa" stroke="#9a7a30"/><path d="M7.5 0.5V3.5H10.5Z" fill="#f0c860"/><path d="M6.3 3.5V8.8Q6.3 11 3.2 11" stroke="#2a62a0" stroke-width="2" fill="none"/></svg>
<div class="t" style="left:58.5px;top:209px;font-size:15px;color:#1e1e1e;white-space:nowrap">UserDetails.java</div>
<svg class="r" style="left:5px;top:240px" width="10" height="6" viewBox="0 0 10 6"><path d="M0 0H10L5 6Z" fill="#3c3c3c"/></svg>
<svg class="r" style="left:22px;top:235px" width="14" height="14" viewBox="0 0 14 14"><defs><radialGradient id="pg"><stop offset="0" stop-color="#f6e2b0"/><stop offset="1" stop-color="#e0b880"/></radialGradient></defs><rect x="1.5" y="1.5" width="11" height="11" fill="url(#pg)" stroke="#c47a50"/><path d="M7 0V14M0 7H14" stroke="#7a4a3a" stroke-width="1"/></svg>
<div class="t" style="left:40.5px;top:232px;font-size:15.3px;color:#111;white-space:nowrap">com.deepnikode.userRegistrationApp.repository</div>
<svg class="r" style="left:26px;top:260px" width="5" height="10" viewBox="0 0 5 10"><path d="M0 0V10L5 5Z" fill="#3c3c3c"/></svg>
<svg class="r" style="left:41px;top:258px" width="11" height="14" viewBox="0 0 11 14"><path d="M0.5 0.5H7.5L10.5 3.5V13.5H0.5Z" fill="#eef3fa" stroke="#9a7a30"/><path d="M7.5 0.5V3.5H10.5Z" fill="#f0c860"/><path d="M6.3 3.5V8.8Q6.3 11 3.2 11" stroke="#2a62a0" stroke-width="2" fill="none"/><circle cx="8" cy="2.5" r="2.3" fill="#5a3ac0"/><path d="M8 1.5V3.5" stroke="#fff" stroke-width="0.8"/></svg>
<div class="t" style="left:58.5px;top:255px;font-size:15px;color:#1e1e1e;white-space:nowrap">UserRepository.java</div>
<svg class="r" style="left:5px;top:286px" width="10" height="6" viewBox="0 0 10 6"><path d="M0 0H10L5 6Z" fill="#3c3c3c"/></svg>
<svg class="r" style="left:22px;top:281px" width="14" height="14" viewBox="0 0 14 14"><defs><radialGradient id="pg"><stop offset="0" stop-color="#f6e2b0"/><stop offset="1" stop-color="#e0b880"/></radialGradient></defs><rect x="1.5" y="1.5" width="11" height="11" fill="url(#pg)" stroke="#c47a50"/><path d="M7 0V14M0 7H14" stroke="#7a4a3a" stroke-width="1"/></svg>
<div class="t" style="left:40.5px;top:278px;font-size:15.3px;color:#111;white-space:nowrap">com.deepnikode.userRegistrationApp.service</div>
<div class="r" style="left:0;top:298px;width:258px;height:23px;background:#e95420"></div>
<svg class="r" style="left:26px;top:306px" width="5" height="10" viewBox="0 0 5 10"><path d="M0 0V10L5 5Z" fill="#f6d0c0"/></svg>
<svg class="r" style="left:41px;top:304px" width="11" height="14" viewBox="0 0 11 14"><path d="M0.5 0.5H7.5L10.5 3.5V13.5H0.5Z" fill="#eef3fa" stroke="#9a7a30"/><path d="M7.5 0.5V3.5H10.5Z" fill="#f0c860"/><path d="M6.3 3.5V8.8Q6.3 11 3.2 11" stroke="#2a62a0" stroke-width="2" fill="none"/></svg>
<div class="t" style="left:58.5px;top:301px;font-size:15px;color:#ffffff;white-space:nowrap">EncryptDecryptService.java</div>
<svg class="r" style="left:5px;top:332px" width="10" height="6" viewBox="0 0 10 6"><path d="M0 0H10L5 6Z" fill="#3c3c3c"/></svg>
<svg class="r" style="left:22px;top:327px" width="14" height="14" viewBox="0 0 14 14"><defs><radialGradient id="pg"><stop offset="0" stop-color="#f6e2b0"/><stop offset="1" stop-color="#e0b880"/></radialGradient></defs><rect x="1.5" y="1.5" width="11" height="11" fill="url(#pg)" stroke="#c47a50"/><path d="M7 0V14M0 7H14" stroke="#7a4a3a" stroke-width="1"/></svg>
<div class="t" style="left:40.5px;top:324px;font-size:15.3px;color:#111;white-space:nowrap">com.deepnikode.userRegistrationApp.util</div>
<svg class="r" style="left:26px;top:352px" width="5" height="10" viewBox="0 0 5 10"><path d="M0 0V10L5 5Z" fill="#3c3c3c"/></svg>
<svg class="r" style="left:41px;top:350px" width="11" height="14" viewBox="0 0 11 14"><path d="M0.5 0.5H7.5L10.5 3.5V13.5H0.5Z" fill="#eef3fa" stroke="#9a7a30"/><path d="M7.5 0.5V3.5H10.5Z" fill="#f0c860"/><path d="M6.3 3.5V8.8Q6.3 11 3.2 11" stroke="#2a62a0" stroke-width="2" fill="none"/></svg>
<div class="t" style="left:58.5px;top:347px;font-size:15px;color:#1e1e1e;white-space:nowrap">EncryptionUtil.java</div>
<svg class="r" style="left:3px;top:374px" width="16" height="12" viewBox="0 0 16 12"><path d="M0.5 2.5H5L6 1.5H12V11.5H0.5Z" fill="#f0d090" stroke="#a0783a"/><path d="M2.5 5.5H15.5L12.5 11.5H0.5Z" fill="#f8e2a8" stroke="#a0783a"/><path d="M7 0V5M10 0V5M5.5 1.5H11.5M5.5 3.5H11.5" stroke="#7a5a3a" stroke-width="0.9"/></svg>
<div class="t" style="left:22.5px;top:370px;font-size:15.3px;color:#111">src/main/resources</div>
<svg class="r" style="left:21px;top:397px" width="16" height="12" viewBox="0 0 16 12"><path d="M0.5 1.5H5L6 2.5H12V11.5H0.5Z" fill="#f0d090" stroke="#a0783a"/><path d="M2.5 5.5H15.5L12.5 11.5H0.5Z" fill="#f8e2a8" stroke="#a0783a"/></svg>
<div class="t" style="left:40px;top:393px;font-size:15.3px;color:#111">static</div>
<svg class="r" style="left:5px;top:423px" width="10" height="6" viewBox="0 0 10 6"><path d="M0 0H10L5 6Z" fill="#3c3c3c"/></svg>
<svg class="r" style="left:21px;top:420px" width="16" height="12" viewBox="0 0 16 12"><path d="M0.5 1.5H5L6 2.5H12V11.5H0.5Z" fill="#f0d090" stroke="#a0783a"/><path d="M2.5 5.5H15.5L12.5 11.5H0.5Z" fill="#f8e2a8" stroke="#a0783a"/></svg>
<div class="t" style="left:40px;top:416px;font-size:15.3px;color:#111">templates</div>
<svg class="r" style="left:24px;top:446px" width="10" height="6" viewBox="0 0 10 6"><path d="M0 0H10L5 6Z" fill="#3c3c3c"/></svg>
<svg class="r" style="left:39px;top:443px" width="16" height="12" viewBox="0 0 16 12"><path d="M0.5 1.5H5L6 2.5H12V11.5H0.5Z" fill="#f0d090" stroke="#a0783a"/><path d="M2.5 5.5H15.5L12.5 11.5H0.5Z" fill="#f8e2a8" stroke="#a0783a"/></svg>
<div class="t" style="left:58.5px;top:439px;font-size:15.3px;color:#111">fragments</div>
<svg class="r" style="left:57px;top:465px" width="15" height="14" viewBox="0 0 15 14"><path d="M0.5 0.5H8L11.5 4V13.5H0.5Z" fill="#f8f8f8" stroke="#8a9ab0"/><path d="M2 9H14" stroke="#e05a20" stroke-width="1.3" stroke-dasharray="1.2 0.6"/></svg>
<div class="t" style="left:76.5px;top:462px;font-size:15.3px;color:#111">topnav.html</div>
<svg class="r" style="left:39px;top:489px" width="16" height="12" viewBox="0 0 16 12"><path d="M0.5 1.5H5L6 2.5H12V11.5H0.5Z" fill="#f0d090" stroke="#a0783a"/><path d="M2.5 5.5H15.5L12.5 11.5H0.5Z" fill="#f8e2a8" stroke="#a0783a"/></svg>
<div class="t" style="left:58.5px;top:485px;font-size:15.3px;color:#111">JS</div>
<svg class="r" style="left:39px;top:511px" width="15" height="14" viewBox="0 0 15 14"><path d="M0.5 0.5H8L11.5 4V13.5H0.5Z" fill="#f8f8f8" stroke="#8a9ab0"/><path d="M2 9H14" stroke="#e05a20" stroke-width="1.3" stroke-dasharray="1.2 0.6"/></svg>
<div class="t" style="left:58.5px;top:508px;font-size:15.3px;color:#111">home.html</div>
<svg class="r" style="left:39px;top:534px" width="15" height="14" viewBox="0 0 15 14"><path d="M0.5 0.5H8L11.5 4V13.5H0.5Z" fill="#f8f8f8" stroke="#8a9ab0"/><path d="M2 9H14" stroke="#e05a20" stroke-width="1.3" stroke-dasharray="1.2 0.6"/></svg>
<div class="t" style="left:58.5px;top:531px;font-size:15.3px;color:#111">login.html</div>
</div>
<div class="r" style="left:370px;top:126px;width:962px;height:611px;background:#fff;border:1px solid #cdc9c4;box-sizing:border-box"></div>
<div class="r" style="left:371px;top:127px;width:960px;height:33px;background:#e3e0dc;border-bottom:1px solid #cdc9c4;box-sizing:border-box"></div>
<div class="r" style="left:1000px;top:127px;width:149px;height:33px;background:#fff;"></div>
<div class="r" style="left:1000px;top:157px;width:149px;height:3px;background:#5f92e2;"></div>
<svg class="r" style="left:378px;top:137px" width="11" height="14" viewBox="0 0 11 14"><path d="M0.5 0.5H7.5L10.5 3.5V13.5H0.5Z" fill="#eef3fa" stroke="#9a7a30"/><path d="M7.5 0.5V3.5H10.5Z" fill="#f0c860"/><path d="M6.3 3.5V8.8Q6.3 11 3.2 11" stroke="#2a62a0" stroke-width="2" fill="none"/></svg>
<div class="t" style="left:395.4px;top:134px;font-size:15.4px;color:#3c3c3c;font-weight:normal;font-family:'Liberation Sans', sans-serif;">HomeController.</div>
<svg class="r" style="left:539px;top:137px" width="11" height="14" viewBox="0 0 11 14"><path d="M0.5 0.5H7.5L10.5 3.5V13.5H0.5Z" fill="#eef3fa" stroke="#9a7a30"/><path d="M7.5 0.5V3.5H10.5Z" fill="#f0c860"/><path d="M6.3 3.5V8.8Q6.3 11 3.2 11" stroke="#2a62a0" stroke-width="2" fill="none"/></svg>
<div class="t" style="left:556px;top:134px;font-size:15.4px;color:#3c3c3c;font-weight:normal;font-family:'Liberation Sans', sans-serif;">UserDetails.jav</div>
<svg class="r" style="left:688px;top:137px" width="11" height="14" viewBox="0 0 11 14"><path d="M0.5 0.5H7.5L10.5 3.5V13.5H0.5Z" fill="#eef3fa" stroke="#9a7a30"/><path d="M7.5 0.5V3.5H10.5Z" fill="#f0c860"/><path d="M6.3 3.5V8.8Q6.3 11 3.2 11" stroke="#2a62a0" stroke-width="2" fill="none"/></svg>
<div class="t" style="left:705.7px;top:134px;font-size:15.4px;color:#3c3c3c;font-weight:normal;font-family:'Liberation Sans', sans-serif;">UserRepository.</div>
<svg class="r" style="left:846px;top:137px" width="11" height="14" viewBox="0 0 11 14"><path d="M0.5 0.5H7.5L10.5 3.5V13.5H0.5Z" fill="#eef3fa" stroke="#9a7a30"/><path d="M7.5 0.5V3.5H10.5Z" fill="#f0c860"/><path d="M6.3 3.5V8.8Q6.3 11 3.2 11" stroke="#2a62a0" stroke-width="2" fill="none"/></svg>
<div class="t" style="left:863.4px;top:134px;font-size:15.4px;color:#3c3c3c;font-weight:normal;font-family:'Liberation Sans', sans-serif;">EncryptDecryptS</div>
<svg class="r" style="left:1007px;top:137px" width="11" height="14" viewBox="0 0 11 14"><path d="M0.5 0.5H7.5L10.5 3.5V13.5H0.5Z" fill="#eef3fa" stroke="#9a7a30"/><path d="M7.5 0.5V3.5H10.5Z" fill="#f0c860"/><path d="M6.3 3.5V8.8Q6.3 11 3.2 11" stroke="#2a62a0" stroke-width="2" fill="none"/></svg>
<div class="t" style="left:1024.3px;top:134px;font-size:15.4px;color:#3c3c3c;font-weight:normal;font-family:'Liberation Sans', sans-serif;">EncryptionUtil.</div>
<svg class="r" style="left:1132px;top:141px;" width="9" height="9" viewBox="0 0 9 9"><path d="M0.5 0.5L8.5 8.5M8.5 0.5L0.5 8.5" stroke="#3a3a3a" stroke-width="1"/></svg>
<svg class="r" style="left:1165.5px;top:137px;" width="10" height="7" viewBox="0 0 10 7"><path d="M1 0.8L3.8 3.5L1 6.2M5 0.8L7.8 3.5L5 6.2" stroke="#444" stroke-width="1.5" fill="none"/></svg>
<div class="t" style="left:1173px;top:136.5px;font-size:10px;color:#333;font-weight:normal;font-family:'Liberation Sans', sans-serif;">8</div>
<div class="r" style="left:1279px;top:138px;width:10px;height:4px;background:transparent;border:1.2px solid #3a3a3a;box-sizing:border-box"></div>
<svg class="r" style="left:1305px;top:138px;" width="11" height="11" viewBox="0 0 11 11"><rect x="0.6" y="0.6" width="9.8" height="9.8" stroke="#3a3a3a" stroke-width="1.2" fill="none"/><path d="M0.6 2.6H10.4" stroke="#3a3a3a" stroke-width="1"/></svg>
<div class="r" style="left:371px;top:160px;width:12px;height:576px;background:#f6f5f4;"></div>
<div class="r" style="left:412px;top:160px;width:1px;height:576px;background:#efefef;"></div>
<div class="r" style="left:1317px;top:160px;width:14px;height:576px;background:#f6f5f4;border-left:1px solid #dedcda;box-sizing:border-box"></div>
<div class="r" style="left:371px;top:160px;width:946px;height:3px;background:linear-gradient(rgba(0,0,0,0.07),rgba(0,0,0,0));z-index:2"></div>
<div class="r" style="left:413px;top:319px;width:904px;height:19px;background:#e8f2fe;"></div>
<div class="r" style="left:371px;top:319px;width:12px;height:133px;background:repeating-conic-gradient(#e8643a 0 25%, #fbe0d4 0 50%) 0 0/2px 2px;border-top:1px solid #e85a20;border-bottom:2px solid #e85a20;box-sizing:border-box"></div>
<div class="r" style="left:455px;top:433px;width:11px;height:19px;background:transparent;border:1.5px solid #7a0a5a;box-sizing:border-box;z-index:5"></div>
<div class="r" style="left:371px;top:160px;width:946px;height:576px;overflow:hidden">
<div class="ln" style="top:-11px">4</div>
<div class="code" style="top:-11px"><b style="color:#7f0055">import</b><span style="color:#c2c2c2">&middot;</span>java.security.Key;<span style="color:#c2c2c2">&para;</span></div>
<div class="ln" style="top:8px">5</div>
<div class="code" style="top:8px"><b style="color:#7f0055">import</b><span style="color:#c2c2c2">&middot;</span>javax.crypto.Cipher;<span style="color:#c2c2c2">&para;</span></div>
<div class="ln" style="top:27px">6</div>
<div class="code" style="top:27px"><b style="color:#7f0055">import</b><span style="color:#c2c2c2">&middot;</span>javax.crypto.spec.SecretKeySpec;<span style="color:#c2c2c2">&para;</span></div>
<div class="ln" style="top:46px">7</div>
<div class="code" style="top:46px"><span style="color:#c2c2c2">&para;</span></div>
<div class="ln" style="top:65px">8</div>
<div class="code" style="top:65px"><b style="color:#7f0055">public</b><span style="color:#c2c2c2">&middot;</span><b style="color:#7f0055">class</b><span style="color:#c2c2c2">&middot;</span>EncryptionUtil<span style="color:#c2c2c2">&middot;</span>{<span style="color:#c2c2c2">&para;</span></div>
<div class="ln" style="top:84px">9</div>
<div class="code" style="top:84px"><span style="color:#c2c2c2">&para;</span></div>
<div class="ln" style="top:103px">10</div>
<div class="code" style="top:103px"><span style="color:#c2c2c2">&middot;&middot;&middot;&middot;</span><b style="color:#7f0055">private</b><span style="color:#c2c2c2">&middot;</span><b style="color:#7f0055">static</b><span style="color:#c2c2c2">&middot;</span><b style="color:#7f0055">final</b><span style="color:#c2c2c2">&middot;</span>String<span style="color:#c2c2c2">&middot;</span><b style="color:#0000c0;font-style:italic">ALGORITHM</b><span style="color:#c2c2c2">&middot;</span>=<span style="color:#c2c2c2">&middot;</span><span style="color:#2a00ff">"AES"</span>;<span style="color:#c2c2c2">&para;</span></div>
<div class="ln" style="top:122px">11</div>
<div class="code" style="top:122px"><span style="color:#c2c2c2">&middot;&middot;&middot;&middot;</span><b style="color:#7f0055">private</b><span style="color:#c2c2c2">&middot;</span><b style="color:#7f0055">static</b><span style="color:#c2c2c2">&middot;</span><b style="color:#7f0055">final</b><span style="color:#c2c2c2">&middot;</span><b style="color:#7f0055">byte</b>[]<span style="color:#c2c2c2">&middot;</span><b style="color:#0000c0;font-style:italic">KEY</b><span style="color:#c2c2c2">&middot;</span>=<span style="color:#c2c2c2">&middot;</span><span style="color:#2a00ff">"MySuperSecretKey"</span>.getBytes(StandardCharsets.<b style="color:#0000c0;font-style:italic">UTF_8</b>);</div>
<div class="ln" style="top:141px">12</div>
<div class="code" style="top:141px"><span style="color:#c2c2c2">&middot;&middot;&middot;&middot;</span><span style="color:#c2c2c2">&para;</span></div>
<div class="ln" style="top:160px">13</div>
<div class="code" style="top:160px"><span style="color:#c2c2c2">&middot;&middot;&middot;&middot;</span><b style="color:#7f0055">public</b><span style="color:#c2c2c2">&middot;</span><b style="color:#7f0055">static</b><span style="color:#c2c2c2">&middot;</span>String<span style="color:#c2c2c2">&middot;</span>encrypt(String<span style="color:#c2c2c2">&middot;</span><span style="color:#6a3e3e">data</span>)<span style="color:#c2c2c2">&middot;</span><b style="color:#7f0055">throws</b><span style="color:#c2c2c2">&middot;</span>Exception<span style="color:#c2c2c2">&middot;</span>{<span style="color:#c2c2c2">&para;</span></div>
<div class="ln" style="top:179px">14</div>
<div class="code" style="top:179px"><span style="color:#c2c2c2">&middot;&middot;&middot;&middot;&middot;&middot;&middot;&middot;</span>Key<span style="color:#c2c2c2">&middot;</span><span style="color:#6a3e3e">key</span><span style="color:#c2c2c2">&middot;</span>=<span style="color:#c2c2c2">&middot;</span><i>generateKey</i>();<span style="color:#c2c2c2">&para;</span></div>
<div class="ln" style="top:198px">15</div>
<div class="code" style="top:198px"><span style="color:#c2c2c2">&middot;&middot;&middot;&middot;&middot;&middot;&middot;&middot;</span>Cipher<span style="color:#c2c2c2">&middot;</span><span style="color:#6a3e3e">cipher</span><span style="color:#c2c2c2">&middot;</span>=<span style="color:#c2c2c2">&middot;</span>Cipher.<i>getInstance</i>(<b style="color:#0000c0;font-style:italic">ALGORITHM</b>);<span style="color:#c2c2c2">&para;</span></div>
<div class="ln" style="top:217px">16</div>
<div class="code" style="top:217px"><span style="color:#c2c2c2">&middot;&middot;&middot;&middot;&middot;&middot;&middot;&middot;</span><span style="color:#6a3e3e">cipher</span>.init(Cipher.<b style="color:#0000c0;font-style:italic">ENCRYPT_MODE</b>,<span style="color:#c2c2c2">&middot;</span><span style="color:#6a3e3e">key</span>);<span style="color:#c2c2c2">&para;</span></div>
<div class="ln" style="top:236px">17</div>
<div class="code" style="top:236px"><span style="color:#c2c2c2">&middot;&middot;&middot;&middot;&middot;&middot;&middot;&middot;</span><b style="color:#7f0055">byte</b>[]<span style="color:#c2c2c2">&middot;</span><span style="color:#6a3e3e">encryptedValue</span><span style="color:#c2c2c2">&middot;</span>=<span style="color:#c2c2c2">&middot;</span><span style="color:#6a3e3e">cipher</span>.doFinal(<span style="color:#6a3e3e">data</span>.getBytes());<span style="color:#c2c2c2">&para;</span></div>
<div class="ln" style="top:255px">18</div>
<div class="code" style="top:255px"><span style="color:#c2c2c2">&middot;&middot;&middot;&middot;&middot;&middot;&middot;&middot;</span><b style="color:#7f0055">return</b><span style="color:#c2c2c2">&middot;</span>java.util.Base64.<i>getEncoder</i>().encodeToString(<span style="color:#6a3e3e">encryptedValue</span>);<span style="color:#c2c2c2">&para;</span></div>
<div class="ln" style="top:274px">19</div>
<div class="code" style="top:274px"><span style="color:#c2c2c2">&middot;&middot;&middot;&middot;</span><span class="bm">}</span><span style="color:#c2c2c2">&para;</span></div>
<div class="ln" style="top:293px">20</div>
<div class="code" style="top:293px"><span style="color:#c2c2c2">&para;</span></div>
<div class="ln" style="top:312px">21</div>
<div class="code" style="top:312px"><span style="color:#c2c2c2">&middot;</span><span style="color:#3f7f5f">//<span style="color:#c2c2c2">&middot;</span><span class="sq">Decryption</span><span style="color:#c2c2c2">&middot;</span>Logic</span><span style="color:#c2c2c2">&para;</span></div>
<div class="ln" style="top:331px">22</div>
<div class="code" style="top:331px"><span style="color:#c2c2c2">&middot;&middot;&middot;&middot;</span><b style="color:#7f0055">public</b><span style="color:#c2c2c2">&middot;</span><b style="color:#7f0055">static</b><span style="color:#c2c2c2">&middot;</span>String<span style="color:#c2c2c2">&middot;</span>decrypt(String<span style="color:#c2c2c2">&middot;</span><span style="color:#6a3e3e">encryptedData</span>)<span style="color:#c2c2c2">&middot;</span><b style="color:#7f0055">throws</b><span style="color:#c2c2c2">&middot;</span>Exception<span style="color:#c2c2c2">&middot;</span>{<span style="color:#c2c2c2">&para;</span></div>
<div class="ln" style="top:350px">23</div>
<div class="code" style="top:350px"><span style="color:#c2c2c2">&middot;&middot;&middot;&middot;&middot;&middot;&middot;&middot;</span>Key<span style="color:#c2c2c2">&middot;</span><span style="color:#6a3e3e">key</span><span style="color:#c2c2c2">&middot;</span>=<span style="color:#c2c2c2">&middot;</span><i>generateKey</i>();<span style="color:#c2c2c2">&para;</span></div>
<div class="ln" style="top:369px">24</div>
<div class="code" style="top:369px"><span style="color:#c2c2c2">&middot;&middot;&middot;&middot;&middot;&middot;&middot;&middot;</span>Cipher<span style="color:#c2c2c2">&middot;</span><span style="color:#6a3e3e">cipher</span><span style="color:#c2c2c2">&middot;</span>=<span style="color:#c2c2c2">&middot;</span>Cipher.<i>getInstance</i>(<b style="color:#0000c0;font-style:italic">ALGORITHM</b>);<span style="color:#c2c2c2">&para;</span></div>
<div class="ln" style="top:388px">25</div>
<div class="code" style="top:388px"><span style="color:#c2c2c2">&middot;&middot;&middot;&middot;&middot;&middot;&middot;&middot;</span><span style="color:#6a3e3e">cipher</span>.init(Cipher.<b style="color:#0000c0;font-style:italic">DECRYPT_MODE</b>,<span style="color:#c2c2c2">&middot;</span><span style="color:#6a3e3e">key</span>);<span style="color:#c2c2c2">&para;</span></div>
<div class="ln" style="top:407px">26</div>
<div class="code" style="top:407px"><span style="color:#c2c2c2">&middot;&middot;&middot;&middot;&middot;&middot;&middot;&middot;</span><b style="color:#7f0055">byte</b>[]<span style="color:#c2c2c2">&middot;</span><span style="color:#6a3e3e">decodedValue</span><span style="color:#c2c2c2">&middot;</span>=<span style="color:#c2c2c2">&middot;</span>java.util.Base64.<i>getDecoder</i>().decode(<span style="color:#6a3e3e">encryptedData</span>);<span style="color:#c2c2c2">&para;</span></div>
<div class="ln" style="top:426px">27</div>
<div class="code" style="top:426px"><span style="color:#c2c2c2">&middot;&middot;&middot;&middot;&middot;&middot;&middot;&middot;</span><b style="color:#7f0055">byte</b>[]<span style="color:#c2c2c2">&middot;</span><span style="color:#6a3e3e">decryptedValue</span><span style="color:#c2c2c2">&middot;</span>=<span style="color:#c2c2c2">&middot;</span><span style="color:#6a3e3e">cipher</span>.doFinal(<span style="color:#6a3e3e">decodedValue</span>);<span style="color:#c2c2c2">&para;</span></div>
<div class="ln" style="top:445px">28</div>
<div class="code" style="top:445px"><span style="color:#c2c2c2">&middot;&middot;&middot;&middot;&middot;&middot;&middot;&middot;</span><b style="color:#7f0055">return</b><span style="color:#c2c2c2">&middot;</span><b style="color:#7f0055">new</b><span style="color:#c2c2c2">&middot;</span>String(<span style="color:#6a3e3e">decryptedValue</span>);<span style="color:#c2c2c2">&para;</span></div>
<div class="ln" style="top:464px">29</div>
<div class="code" style="top:464px"><span style="color:#c2c2c2">&middot;&middot;&middot;&middot;</span>}<span style="color:#c2c2c2">&para;</span></div>
<div class="ln" style="top:483px">30</div>
<div class="code" style="top:483px"><span style="color:#c2c2c2">&para;</span></div>
<div class="ln" style="top:502px">31</div>
<div class="code" style="top:502px"><span style="color:#c2c2c2">&middot;&middot;&middot;&middot;</span><b style="color:#7f0055">private</b><span style="color:#c2c2c2">&middot;</span><b style="color:#7f0055">static</b><span style="color:#c2c2c2">&middot;</span>Key<span style="color:#c2c2c2">&middot;</span>generateKey()<span style="color:#c2c2c2">&middot;</span>{<span style="color:#c2c2c2">&para;</span></div>
<div class="ln" style="top:521px">32</div>
<div class="code" style="top:521px"><span style="color:#c2c2c2">&middot;&middot;&middot;&middot;&middot;&middot;&middot;&middot;</span><b style="color:#7f0055">return</b><span style="color:#c2c2c2">&middot;</span><b style="color:#7f0055">new</b><span style="color:#c2c2c2">&middot;</span>SecretKeySpec(<b style="color:#0000c0;font-style:italic">KEY</b>,<span style="color:#c2c2c2">&middot;</span><b style="color:#0000c0;font-style:italic">ALGORITHM</b>);<span style="color:#c2c2c2">&para;</span></div>
<div class="ln" style="top:540px">33</div>
<div class="code" style="top:540px"><span style="color:#c2c2c2">&middot;&middot;&middot;&middot;</span>}<span style="color:#c2c2c2">&para;</span></div>
<div class="ln" style="top:559px">34</div>
<div class="code" style="top:559px">}<span style="color:#c2c2c2">&para;</span></div>
<svg class="r" style="left:84px;top:327px" width="100" height="3" viewBox="0 0 100 3"><path d="M0 2.5L1 0.5L2 2.5L3 0.5L4 2.5L5 0.5L6 2.5L7 0.5L8 2.5L9 0.5L10 2.5L11 0.5L12 2.5L13 0.5L14 2.5L15 0.5L16 2.5L17 0.5L18 2.5L19 0.5L20 2.5L21 0.5L22 2.5L23 0.5L24 2.5L25 0.5L26 2.5L27 0.5L28 2.5L29 0.5L30 2.5L31 0.5L32 2.5L33 0.5L34 2.5L35 0.5L36 2.5L37 0.5L38 2.5L39 0.5L40 2.5L41 0.5L42 2.5L43 0.5L44 2.5L45 0.5L46 2.5L47 0.5L48 2.5L49 0.5L50 2.5L51 0.5L52 2.5L53 0.5L54 2.5L55 0.5L56 2.5L57 0.5L58 2.5L59 0.5L60 2.5L61 0.5L62 2.5L63 0.5L64 2.5L65 0.5L66 2.5L67 0.5L68 2.5L69 0.5L70 2.5L71 0.5L72 2.5L73 0.5L74 2.5L75 0.5L76 2.5L77 0.5L78 2.5L79 0.5L80 2.5L81 0.5L82 2.5L83 0.5L84 2.5L85 0.5L86 2.5L87 0.5L88 2.5L89 0.5L90 2.5L91 0.5L92 2.5L93 0.5L94 2.5L95 0.5L96 2.5L97 0.5L98 2.5L99 0.5L100 2.5" stroke="#f08080" stroke-width="0.8" fill="none" opacity="0.75"/></svg>
<svg class="r" style="left:33px;top:164px" width="9" height="9" viewBox="0 0 9 9"><circle cx="4.5" cy="4.5" r="4" fill="#fff" stroke="#8a8a8a"/><path d="M2.5 4.5H6.5" stroke="#6a6a6a"/></svg>
<svg class="r" style="left:33px;top:335px" width="9" height="9" viewBox="0 0 9 9"><circle cx="4.5" cy="4.5" r="4" fill="#fff" stroke="#8a8a8a"/><path d="M2.5 4.5H6.5" stroke="#6a6a6a"/></svg>
<svg class="r" style="left:33px;top:506px" width="9" height="9" viewBox="0 0 9 9"><circle cx="4.5" cy="4.5" r="4" fill="#fff" stroke="#8a8a8a"/><path d="M2.5 4.5H6.5" stroke="#6a6a6a"/></svg>
</div>
<div class="r" style="left:413px;top:729px;width:904px;height:7px;background:linear-gradient(rgba(0,0,0,0),rgba(0,0,0,0.07));z-index:3"></div>
<div class="r" style="left:107px;top:729px;width:258px;height:7px;background:linear-gradient(rgba(0,0,0,0),rgba(0,0,0,0.06));z-index:3"></div>
<div class="r" style="left:1342px;top:128px;width:2px;height:2px;background:#8a8070;"></div>
<div class="r" style="left:1346px;top:128px;width:2px;height:2px;background:#8a8070;"></div>
<div class="r" style="left:1350px;top:128px;width:2px;height:2px;background:#8a8070;"></div>
<div class="r" style="left:1354px;top:128px;width:2px;height:2px;background:#8a8070;"></div>
<svg class="r" style="left:1344px;top:141px;" width="10" height="10" viewBox="0 0 10 10"><rect x="0.75" y="3.75" width="6.5" height="5.5" stroke="#8a8070" stroke-width="1.5" fill="#f6f5f4"/><path d="M3 3V0.75H9.25V6H7.5" stroke="#8a8070" stroke-width="1.5" fill="none"/></svg>
<svg class="r" style="left:1340px;top:164px;" width="16" height="17" viewBox="0 0 16 17"><rect x="0.5" y="0.5" width="10" height="15" fill="#eef2f8" stroke="#8a9ab0"/><path d="M10.5 0.5Q15 3 15 8V15.5H10.5" fill="#e0e8f0" stroke="#8a9ab0"/><circle cx="5" cy="4.5" r="3" fill="#e02020"/><path d="M3 8V15" stroke="#2a5ab0" stroke-width="2"/><path d="M8 15V10L12 15Z" fill="#e8a020"/></svg>
<div class="t" style="left:1343px;top:189.5px;font-size:12px;color:#2a62b0;font-weight:bold;font-family:'Liberation Sans', sans-serif;font-style:italic">@</div>
<svg class="r" style="left:1341px;top:218px;" width="16" height="17" viewBox="0 0 16 17"><path d="M0.5 0.5H7L10.5 4V14.5H0.5Z" fill="#fafafa" stroke="#a08040"/><path d="M4 4Q2.5 4 2.5 6V7Q2 7.5 2.5 8V9Q2.5 11 4 11M5 6H8M5 8H8" stroke="#2a5a9a" stroke-width="0.9" fill="none"/><path d="M7 11H12V9L15.5 12.5L12 16V14H7Z" fill="#f0c050" stroke="#c08020" stroke-width="0.8"/></svg>
<svg class="r" style="left:1342px;top:247px;" width="15" height="14" viewBox="0 0 15 14"><rect x="0.5" y="0.5" width="14" height="10" rx="1.5" fill="#3a6fb6" stroke="#2a5aa0"/><rect x="2.5" y="2.5" width="10" height="6" fill="#eaf2fb"/><path d="M4 4.5H10M4 6.5H8" stroke="#3a6fb6" stroke-width="1"/><path d="M4 13H11M7.5 11V13" stroke="#2a5aa0" stroke-width="1.6"/></svg>
<div class="r" style="left:563px;top:740px;width:1px;height:24px;background:#d8d6d3;"></div>
<div class="r" style="left:716px;top:740px;width:1px;height:24px;background:#d8d6d3;"></div>
<div class="r" style="left:862px;top:740px;width:1px;height:24px;background:#d8d6d3;"></div>
<div class="t" style="left:570px;top:741px;font-size:15px;color:#3a3a3a;font-weight:normal;font-family:'Liberation Sans', sans-serif;letter-spacing:0.3px">Writable</div>
<div class="t" style="left:723px;top:741px;font-size:15px;color:#3a3a3a;font-weight:normal;font-family:'Liberation Sans', sans-serif;">Smart Insert</div>
<div class="t" style="left:869.4px;top:741px;font-size:15px;color:#3a3a3a;font-weight:normal;font-family:'Liberation Sans', sans-serif;letter-spacing:-0.6px">13 : 65 : 430</div>
<div class="r" style="left:1006px;top:746px;width:2px;height:2px;background:#b8b0a4;"></div>
<div class="r" style="left:1006px;top:750px;width:2px;height:2px;background:#b8b0a4;"></div>
<div class="r" style="left:1006px;top:754px;width:2px;height:2px;background:#b8b0a4;"></div>
<div class="r" style="left:1006px;top:758px;width:2px;height:2px;background:#b8b0a4;"></div>
<div class="r" style="left:1328px;top:746px;width:2px;height:2px;background:#b8b0a4;"></div>
<div class="r" style="left:1328px;top:750px;width:2px;height:2px;background:#b8b0a4;"></div>
<div class="r" style="left:1328px;top:754px;width:2px;height:2px;background:#b8b0a4;"></div>
<div class="r" style="left:1328px;top:758px;width:2px;height:2px;background:#b8b0a4;"></div>
<svg class="r" style="left:1297px;top:743px;" width="17" height="18" viewBox="0 0 17 18"><g fill="#e6f2e6"><path d="M1.5 1.5H12V8H1.5Z"/><path d="M3.5 3.5H14V10H3.5Z"/><path d="M5.5 5.5H16V12H5.5Z"/></g><path d="M1.5 8V1.5H12M3.5 10V3.5H14M5.5 12V5.5H16V9" stroke="#a09080" stroke-width="1" fill="none"/><path d="M2 2.5H11.5M4 4.5H13.5" stroke="#90d0a0" stroke-width="1"/><path d="M6 6.7H15.5" stroke="#48b050" stroke-width="1.4"/><path d="M1.5 7V8.5M3.5 9V10.5M5.5 11V12.5" stroke="#3a6aa0" stroke-width="1"/><circle cx="11.7" cy="12.7" r="4.3" fill="#dc5050"/><path d="M9.8 10.5L13.6 15M13.6 10.5L9.8 15" stroke="#fff" stroke-width="1"/></svg>
<svg class="r" style="left:1344px;top:744px;" width="11" height="16" viewBox="0 0 11 16"><defs><radialGradient id="bg1" cx="0.5" cy="0.7" r="0.6"><stop offset="0" stop-color="#fffef0"/><stop offset="1" stop-color="#f8e090"/></radialGradient></defs><path d="M3 11Q3 9 1.8 7.5A4.6 4.6 0 1 1 9.2 7.5Q8 9 8 11Z" fill="url(#bg1)" stroke="#f0a820" stroke-width="1.1"/><rect x="3" y="11" width="5" height="4.4" rx="0.8" fill="#4a6080"/><rect x="4" y="12" width="3" height="1.3" fill="#d0dae6"/></svg></body></html>
